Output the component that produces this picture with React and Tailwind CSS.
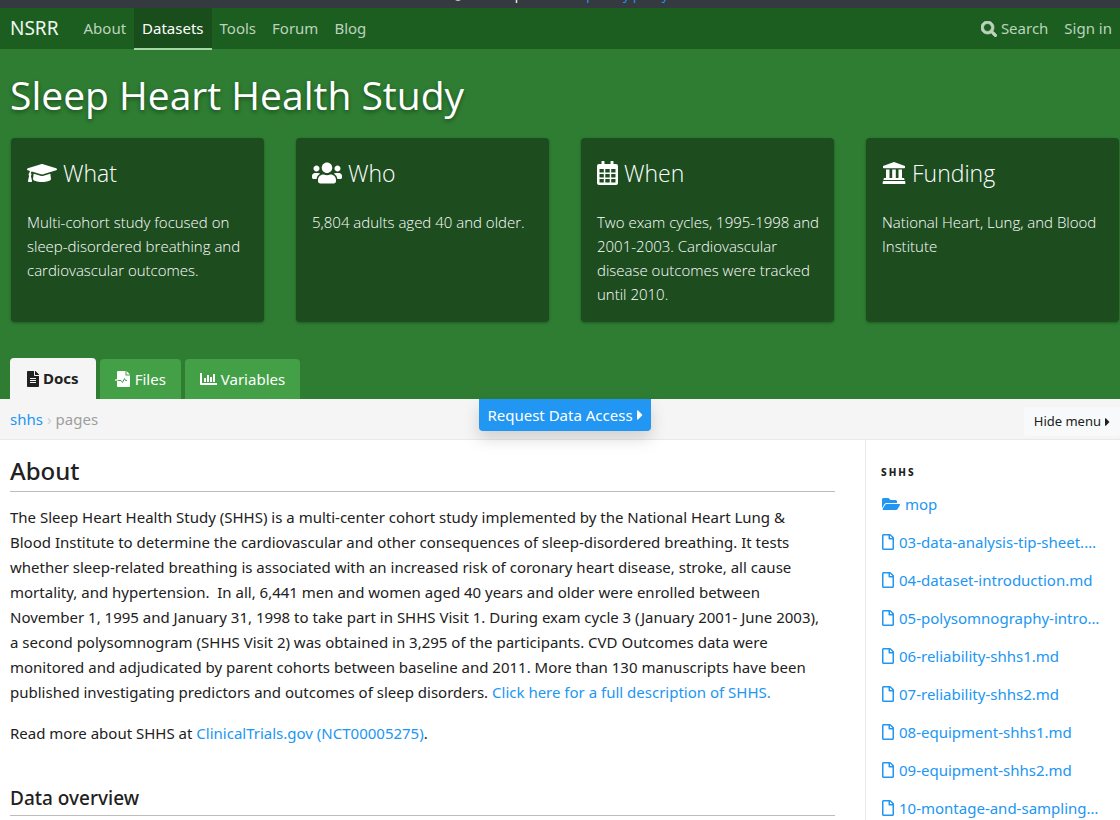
import { FaSearch, FaGraduationCap, FaUsers, FaInfoCircle, FaFileAlt, FaCaretRight, FaFolderOpen, FaRegFile } from "react-icons/fa";

const files = [
  "03-data-analysis-tip-sheet.md",
  "04-dataset-introduction.md",
  "05-polysomnography-introduction.md",
  "06-reliability-shhs1.md",
  "07-reliability-shhs2.md",
  "08-equipment-shhs1.md",
  "09-equipment-shhs2.md",
  "10-montage-and-sampling-rate.md",
];

function CalendarIcon() {
  return (
    <svg className="h-6 w-[21px] shrink-0" viewBox="0 0 21 24" fill="currentColor" fillRule="evenodd" aria-hidden="true">
      <path d="M5 0h2q.5 0 .5.5V3h6V.5q0-.5.5-.5h2q.5 0 .5.5V3H19q2 0 2 2v17q0 2-2 2H2q-2 0-2-2V5q0-2 2-2h2.500V.5Q4.500 0 5 0zM2.500 8v3.500h4.300V8zM8.300 8v3.500h4.400V8zM14.200 8v3.500h4.300V8zM2.500 13v3.500h4.300V13zM8.300 13v3.500h4.400V13zM14.200 13v3.500h4.300V13zM2.500 18v3.500h4.300V18zM8.300 18v3.500h4.400V18zM14.200 18v3.500h4.300V18z" />
    </svg>
  );
}

function InstitutionIcon() {
  return (
    <svg className="h-[22px] w-6 shrink-0" viewBox="0 0 24 22" fill="currentColor" aria-hidden="true">
      <path d="M12 0l11 4v1.600q0 .7-.7.7H1.700Q1 6.300 1 5.600V4zM4 7.500h3.500V17H4zM10.200 7.500h3.600V17h-3.600zM16.500 7.500H20V17h-3.500zM2.500 16h19q.9 0 .9.9V18H1.600v-1.100q0-.9.9-.9zM1.500 19h21q.8 0 .8.8V22H.7v-2.200q0-.8.8-.8z" />
    </svg>
  );
}

function FileMedicalIcon() {
  return (
    <svg className="h-4 w-4 shrink-0" viewBox="0 0 16 16" aria-hidden="true">
      <path d="M3 0h7.500v4.500H15V15q0 1-1 1H3q-1 0-1-1V1q0-1 1-1z" fill="currentColor" />
      <path d="M11.500 0l3.500 3.500h-3.500z" fill="currentColor" />
      <path d="M2 9.500h4l1.500 2 2-4 1 2h1.500" fill="none" stroke="#43a047" strokeWidth="1" />
      <path d="M0 9h3" stroke="currentColor" strokeWidth="1.200" />
    </svg>
  );
}

function ChartIcon() {
  return (
    <svg className="h-4 w-[17px] shrink-0" viewBox="0 0 17 16" fill="currentColor" aria-hidden="true">
      <path d="M0 2h2v10h15v2H1q-1 0-1-1zM4 7h2v4H4zM7 4h2v7H7zM10 6h2v5h-2zM13 3h2v8h-2z" />
    </svg>
  );
}

const cards = [
  { title: "What", icon: <FaGraduationCap className="h-6 w-[30px] shrink-0" aria-hidden="true" />, text: "Multi-cohort study focused on sleep-disordered breathing and cardiovascular outcomes." },
  { title: "Who", icon: <FaUsers className="h-6 w-[30px] shrink-0" aria-hidden="true" />, text: "5,804 adults aged 40 and older." },
  { title: "When", icon: <CalendarIcon />, text: "Two exam cycles, 1995-1998 and 2001-2003. Cardiovascular disease outcomes were tracked until 2010." },
  { title: "Funding", icon: <InstitutionIcon />, text: "National Heart, Lung, and Blood Institute" },
];

const navLink = "flex items-center px-2 text-[#bdd3be]";

export default function App() {
  return (
    <div className="h-screen overflow-hidden bg-white font-['Noto_Sans',sans-serif] text-[15px] text-[#212121]">
      <div className="flex h-2 items-end justify-center overflow-hidden bg-[#343a40] pb-[3px] text-white">
        <p className="flex items-center gap-1 text-[13px] leading-5 whitespace-nowrap">
          <FaInfoCircle className="size-3" aria-hidden="true" />
          <span>We've updated our <a href="#privacy" className="text-[#2196f3]">privacy policy</a></span>
        </p>
      </div>

      <nav className="flex h-[41px] items-stretch bg-[#1b5e20]">
        <a href="#home" className="mr-[17px] flex items-center pl-[10px] text-[19px] text-[#f1f6f1]">NSRR</a>
        <a href="#about" className={navLink}>About</a>
        <a href="#datasets" className="-mb-px flex items-center border-b-2 border-[#a5d6a7] bg-[#194d1b] px-2 text-white">Datasets</a>
        <a href="#tools" className={navLink}>Tools</a>
        <a href="#forum" className={navLink}>Forum</a>
        <a href="#blog" className={navLink}>Blog</a>
        <a href="#search" className="ml-auto flex items-center gap-1 px-2 text-[#bdd3be]">
          <FaSearch className="size-4 stroke-current stroke-[24px]" aria-hidden="true" />Search
        </a>
        <a href="#signin" className={navLink}>Sign in</a>
      </nav>

      <header className="bg-[#2e7d32] text-white">
        <h1 className="px-[10px] pt-[19px] font-['Open_Sans',sans-serif] text-[39px] leading-[54px] [text-shadow:0_2px_4px_rgba(0,0,0,0.4)]">Sleep Heart Health Study</h1>
        <div className="grid grid-cols-4 gap-8 pt-4 pr-px pl-[11px] font-['Open_Sans',sans-serif]">
          {cards.map((c) => (
            <section key={c.title} className="min-h-[184px] rounded bg-[#1d4d1f] pt-4 pr-2 pb-4 pl-4 shadow-[0_1px_3px_rgba(0,0,0,0.3)]">
              <h2 className="flex h-[38px] items-center gap-[6px] text-[23px] font-light">{c.icon}{c.title}</h2>
              <p className="pt-[18px] text-[15px] leading-6 font-light">{c.text}</p>
            </section>
          ))}
        </div>
        <div className="flex items-end gap-1 px-[10px] pt-9">
          <a href="#docs" className="flex h-[41px] items-center gap-1 rounded-t bg-[#f5f5f5] px-[17px] font-bold text-[#212121]"><FaFileAlt className="h-4 w-3" aria-hidden="true" />Docs</a>
          <a href="#files" className="flex h-10 items-center gap-1 rounded-t bg-[#43a047] px-[15px]"><FileMedicalIcon />Files</a>
          <a href="#variables" className="flex h-10 items-center gap-1 rounded-t bg-[#43a047] px-[15px]"><ChartIcon />Variables</a>
        </div>
      </header>

      <div className="grid h-[41px] grid-cols-[1fr_auto_1fr] border-b border-[#e9e9e9] bg-[#f5f5f5] pl-[10px]">
        <ol className="flex items-center gap-1">
          <li><a href="#shhs" className="text-[#2196f3]">shhs</a></li>
          <li aria-hidden="true" className="text-[#d0d0d0]">›</li>
          <li className="text-[#9e9e9e]">pages</li>
        </ol>
        <a href="#request" className="z-10 flex h-8 items-center gap-1 rounded-b bg-[#2196f3] px-2 text-white shadow-[0_8px_16px_rgba(0,0,0,0.15)]">
          Request Data Access<FaCaretRight className="h-4 w-[6px]" aria-hidden="true" />
        </a>
        <button type="button" className="mt-2 flex h-[29px] items-center gap-1 justify-self-end rounded bg-[#f8f9fa] px-[10px] text-[13px]">
          Hide menu<FaCaretRight className="h-[14px] w-[5px]" aria-hidden="true" />
        </button>
      </div>

      <div className="flex">
        <main className="min-w-0 flex-1 pr-[30px] pl-[10px]">
          <h2 className="border-b border-[#bdbdbd] pt-[15px] pb-[5px] text-[24px] leading-[31px] font-medium">About</h2>
          <p className="pt-[13px] leading-[25px]">
            The Sleep Heart Health Study (SHHS) is a multi-center cohort study implemented by the National Heart Lung &amp;<br />
            Blood Institute to determine the cardiovascular and other consequences of sleep-disordered breathing. It tests<br />
            whether sleep-related breathing is associated with an increased risk of coronary heart disease, stroke, all cause<br />
            mortality, and hypertension.&nbsp; In all, 6,441 men and women aged 40 years and older were enrolled between<br />
            November 1, 1995 and January 31, 1998 to take part in SHHS Visit 1. During exam cycle 3 (January 2001- June 2003),<br />
            a second polysomnogram (SHHS Visit 2) was obtained in 3,295 of the participants. CVD Outcomes data were<br />
            monitored and adjudicated by parent cohorts between baseline and 2011. More than 130 manuscripts have been<br />
            published investigating predictors and outcomes of sleep disorders. <a href="#description" className="text-[#2196f3]">Click here for a full description of SHHS.</a>
          </p>
          <p className="pt-4 leading-[25px]">
            Read more about SHHS at <a href="#trial" className="text-[#2196f3]">ClinicalTrials.gov (NCT00005275)</a>.
          </p>
          <h3 className="mt-[38px] border-b border-[#bdbdbd] pb-[3px] text-[19px] leading-[28px] font-medium">Data overview</h3>
        </main>
        <aside className="h-96 w-[255px] shrink-0 border-l border-[#e9e9e9] pr-[18px] pl-[15px]">
          <h4 className="pt-6 text-[10px] leading-4 font-extrabold tracking-[2px]">SHHS</h4>
          <a href="#mop" className="mt-[5px] flex h-[38px] items-center gap-1 text-[#2196f3]"><FaFolderOpen className="h-4 w-5" aria-hidden="true" />mop</a>
          {files.map((f) => (
            <a key={f} href={"#" + f} className="flex h-[38px] items-center gap-1 text-[#2196f3]">
              <FaRegFile className="h-4 w-[14px] shrink-0" aria-hidden="true" />
              <span className="truncate">{f}</span>
            </a>
          ))}
        </aside>
      </div>
    </div>
  );
}
